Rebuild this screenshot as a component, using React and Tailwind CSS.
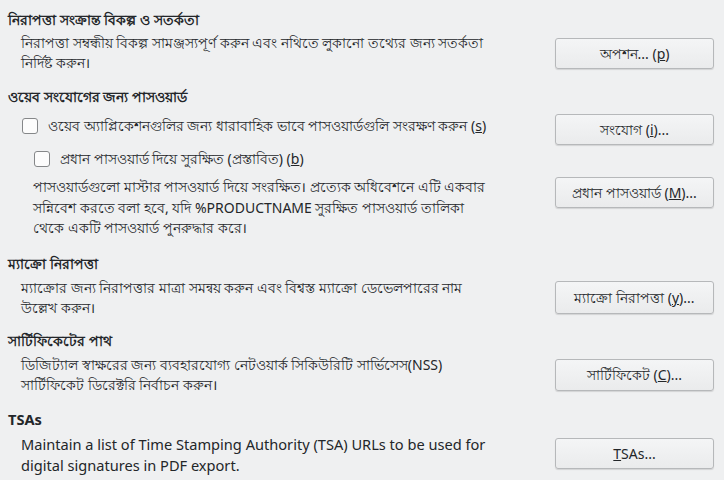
import { useState } from 'react';

function Button({ children, className = '' }) {
  return (
    <button
      type="button"
      className={`w-[159px] h-[31px] shrink-0 rounded-[3px] border border-[#b6b8ba] bg-gradient-to-b from-[#f4f5f6] to-[#eaebec] shadow-[0_1px_1px_rgba(0,0,0,0.12)] text-[14px] text-[#232629] ${className}`}
    >
      {children}
    </button>
  );
}

function Check({ checked, onChange, children }) {
  return (
    <label className="flex items-start gap-[10px] cursor-default">
      <span
        onClick={onChange}
        className="mt-[2px] w-[16px] h-[16px] shrink-0 rounded-[3px] border border-[#858789] bg-[#fcfcfc] flex items-center justify-center"
      >
        {checked && (
          <svg viewBox="0 0 12 12" className="w-[10px] h-[10px]">
            <path d="M2 6.5l2.5 2.5L10 3" fill="none" stroke="#3daee9" strokeWidth="2" />
          </svg>
        )}
      </span>
      <span className="leading-[20px]">{children}</span>
    </label>
  );
}

function Heading({ children, className = '' }) {
  return <div className={`pl-[8px] font-bold leading-[20px] ${className}`}>{children}</div>;
}

export default function App() {
  const [save, setSave] = useState(false);
  const [master, setMaster] = useState(false);

  return (
    <div
      className="w-[724px] h-[480px] overflow-hidden bg-[#eff0f1] text-[#232629] text-[14px]"
      style={{ fontFamily: '"Noto Sans", "Open Sans", sans-serif' }}
    >
      <Heading className="pt-[10px]">নিরাপত্তা সংক্রান্ত বিকল্প ও সতর্কতা</Heading>
      <div className="flex items-start mt-[3px] pl-[21px] pr-[10px]">
        <p className="flex-1 leading-[20px] pr-[60px]">
          নিরাপত্তা সম্বন্ধীয় বিকল্প সামঞ্জস্যপূর্ণ করুন এবং নথিতে লুকানো তথ্যের জন্য সতর্কতা নির্দিষ্ট করুন।
        </p>
        <Button className="mt-[5px]">
          অপশন... (<span className="underline">p</span>)
        </Button>
      </div>

      <Heading className="mt-[14px]">ওয়েব সংযোগের জন্য পাসওয়ার্ড</Heading>
      <div className="flex items-start mt-[7px] pl-[22px] pr-[10px]">
        <div className="flex-1 pt-[2px]">
          <Check checked={save} onChange={() => setSave(!save)}>
            ওয়েব অ্যাপ্লিকেশনগুলির জন্য ধারাবাহিক ভাবে পাসওয়ার্ডগুলি সংরক্ষণ করুন (<span className="underline">s</span>)
          </Check>
          <div className="pl-[12px] mt-[13px]">
            <Check checked={master} onChange={() => setMaster(!master)}>
              প্রধান পাসওয়ার্ড দিয়ে সুরক্ষিত (প্রস্তাবিত) (<span className="underline">b</span>)
            </Check>
          </div>
        </div>
        <Button>
          সংযোগ (<span className="underline">i</span>)...
        </Button>
      </div>
      <div className="flex items-start mt-[8px] pl-[33px] pr-[10px]">
        <p className="flex-1 leading-[20.5px] pr-[60px]">
          পাসওয়ার্ডগুলো মাস্টার পাসওয়ার্ড দিয়ে সংরক্ষিত। প্রত্যেক অধিবেশনে এটি একবার সন্নিবেশ করতে বলা হবে, যদি %PRODUCTNAME সুরক্ষিত পাসওয়ার্ড তালিকা থেকে একটি পাসওয়ার্ড পুনরুদ্ধার করে।
        </p>
        <Button>
          প্রধান পাসওয়ার্ড (<span className="underline">M</span>)...
        </Button>
      </div>

      <Heading className="mt-[15px]">ম্যাক্রো নিরাপত্তা</Heading>
      <div className="flex items-start mt-[4px] pl-[21px] pr-[10px]">
        <p className="flex-1 leading-[20px] pr-[60px]">
          ম্যাক্রোর জন্য নিরাপত্তার মাত্রা সমন্বয় করুন এবং বিশ্বস্ত ম্যাক্রো ডেভেলপারের নাম উল্লেখ করুন।
        </p>
        <Button className="mt-[3px] h-[33px]">
          ম্যাক্রো নিরাপত্তা (<span className="underline">y</span>)...
        </Button>
      </div>

      <Heading className="mt-[13px]">সার্টিফিকেটের পাথ</Heading>
      <div className="flex items-start mt-[4px] pl-[21px] pr-[10px]">
        <p className="flex-1 leading-[20px] pr-[60px]">
          ডিজিট্যাল স্বাক্ষরের জন্য ব্যবহারযোগ্য নেটওয়ার্ক সিকিউরিটি সার্ভিসেস(NSS) সার্টিফিকেট ডিরেক্টরি নির্বাচন করুন।
        </p>
        <Button className="mt-[4px] h-[32px]">
          সার্টিফিকেট (<span className="underline">C</span>)...
        </Button>
      </div>

      <Heading className="mt-[14px] text-[14.6px]">TSAs</Heading>
      <div className="flex items-start mt-[5px] pl-[21px] pr-[10px]">
        <p className="flex-1 leading-[21px] text-[14.6px] pr-[50px]">
          Maintain a list of Time Stamping Authority (TSA) URLs to be used for digital signatures in PDF export.
        </p>
        <Button className="mt-[4px] text-[14.6px]">
          <span className="underline">T</span>SAs...
        </Button>
      </div>
    </div>
  );
}
